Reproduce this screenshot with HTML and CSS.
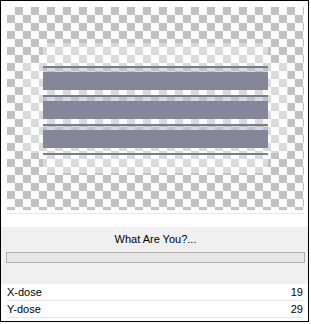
FILE: index.html
```html
<!DOCTYPE html>
<html>
<head>
<meta charset="utf-8">
<link rel="stylesheet" href="styles.css">
</head>
<body>
<div class="frame">
  <div class="preview">
    <div class="canvas">
      <div class="glow"></div>
      <div class="bars">
        <div class="line"></div><div class="bar"></div>
        <div class="line"></div><div class="bar"></div>
        <div class="line"></div><div class="bar"></div>
        <div class="line"></div>
      </div>
    </div>
    <div class="dots"></div>
  </div>
  <div class="panel">
    <div class="title">What Are You?...</div>
    <div class="progress"></div>
  </div>
  <div class="rows">
    <div class="row"><span>X-dose</span><span>19</span></div>
    <div class="row"><span>Y-dose</span><span>29</span></div>
  </div>
</div>
</body>
</html>
```
FILE: styles.css
```css
html, body {
  margin: 0;
  padding: 0;
  background: #fff;
}
.frame {
  box-sizing: border-box;
  width: 309px;
  height: 322px;
  border: 1px solid #000;
  display: flex;
  flex-direction: column;
  font-family: "Liberation Sans", Arial, sans-serif;
  font-size: 11px;
  color: #000;
}
.preview {
  box-sizing: border-box;
  height: 226px;
  padding: 6px 0 0 6px;
}
.canvas {
  position: relative;
  width: 297px;
  height: 203px;
  background: repeating-conic-gradient(#c2c2c2 0 25%, #ffffff 0 50%) 0 0 / 16px 16px;
  box-sizing: border-box;
  padding: 59px 0 0 36px;
}
.glow {
  position: absolute;
  left: 16px;
  top: 36px;
  width: 265px;
  height: 130px;
  background: rgba(255, 255, 255, 0.4);
  clip-path: polygon(20px 0, 245px 0, 245px 20px, 265px 20px, 265px 110px, 245px 110px, 245px 130px, 20px 130px, 20px 110px, 0 110px, 0 20px, 20px 20px);
}
.bars {
  position: relative;
  width: 225px;
  display: flex;
  flex-direction: column;
}
.line {
  height: 2px;
  background: #7c7c90;
}
.bar {
  height: 18px;
  background: #86869a;
  background-clip: padding-box;
}
.line + .bar {
  border-top: 4px solid rgba(134, 134, 154, 0.3);
}
.bar + .line {
  margin-top: 5px;
}
.dots {
  width: 297px;
  margin-top: 3px;
  border-top: 1px dotted #dcdcdc;
}
.panel {
  box-sizing: border-box;
  height: 57px;
  background: #f0f0f0;
  padding: 0 3px 0 5px;
}
.title {
  height: 24px;
  line-height: 24px;
  text-align: center;
}
.progress {
  box-sizing: border-box;
  margin-top: 1px;
  height: 11px;
  border: 1px solid #b0b0b0;
  background: #e6e6e6;
}
.rows {
  padding: 0 5px 0 6px;
}
.row {
  display: flex;
  justify-content: space-between;
  height: 16px;
  line-height: 16px;
  border-bottom: 1px solid #e6e6e6;
}
```
